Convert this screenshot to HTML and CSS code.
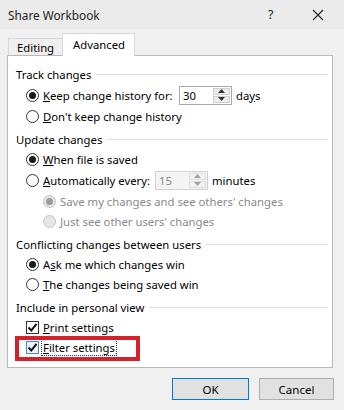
FILE: index.html
```html
<!DOCTYPE html>
<html lang="en">
<head>
    <meta charset="UTF-8">
    <title>Share Workbook</title>
    <link rel="stylesheet" href="styles.css">
</head>
<body>
    <div class="dialog">
        <div class="titlebar">
            <span class="title">Share Workbook</span>
            <span class="help">?</span>
            <span class="close">
                <svg width="12" height="12" viewBox="0 0 12 12"><path d="M1 1L11 11M11 1L1 11" stroke="#222" stroke-width="1.1"/></svg>
            </span>
        </div>

        <div class="tabs">
            <div class="tab">Editing</div>
            <div class="tab active">Advanced</div>
        </div>

        <div class="panel">
            <!-- Track changes -->
            <div class="group first"><span>Track changes</span></div>
            <div class="row r-spin">
                <span class="radio checked"></span>
                <span class="label w-keep"><u>K</u>eep change history for:</span>
                <div class="spin">
                    <span class="spin-val">30</span>
                    <span class="spin-btns">
                        <span class="spin-btn"><svg width="7" height="4" viewBox="0 0 7 4"><path d="M0 4L3.5 0L7 4Z" fill="#333"/></svg></span>
                        <span class="spin-btn"><svg width="7" height="4" viewBox="0 0 7 4"><path d="M0 0L3.5 4L7 0Z" fill="#333"/></svg></span>
                    </span>
                </div>
                <span class="after">da<u>y</u>s</span>
            </div>
            <div class="row">
                <span class="radio"></span>
                <span class="label"><u>D</u>on't keep change history</span>
            </div>

            <!-- Update changes -->
            <div class="group"><span>Update changes</span></div>
            <div class="row">
                <span class="radio checked"></span>
                <span class="label"><u>W</u>hen file is saved</span>
            </div>
            <div class="row r-spin">
                <span class="radio"></span>
                <span class="label w-auto"><u>A</u>utomatically every:</span>
                <div class="spin disabled">
                    <span class="spin-val">15</span>
                    <span class="spin-btns">
                        <span class="spin-btn"><svg width="7" height="4" viewBox="0 0 7 4"><path d="M0 4L3.5 0L7 4Z" fill="#a0a0a0"/></svg></span>
                        <span class="spin-btn"><svg width="7" height="4" viewBox="0 0 7 4"><path d="M0 0L3.5 4L7 0Z" fill="#a0a0a0"/></svg></span>
                    </span>
                </div>
                <span class="after">minutes</span>
            </div>
            <div class="row sub disabled">
                <span class="radio checked"></span>
                <span class="label">Save my changes and see others' changes</span>
            </div>
            <div class="row sub disabled">
                <span class="radio"></span>
                <span class="label">Just see other users' changes</span>
            </div>

            <!-- Conflicts -->
            <div class="group"><span>Conflicting changes between users</span></div>
            <div class="row">
                <span class="radio checked"></span>
                <span class="label">A<u>s</u>k me which changes win</span>
            </div>
            <div class="row">
                <span class="radio"></span>
                <span class="label"><u>T</u>he changes being saved win</span>
            </div>

            <!-- Personal view -->
            <div class="group"><span>Include in personal view</span></div>
            <div class="row">
                <span class="check"><svg width="11" height="11" viewBox="0 0 11 11"><path d="M1.5 5.5L4.3 8.5L9.5 1.8" fill="none" stroke="#111" stroke-width="2"/></svg></span>
                <span class="label"><u>P</u>rint settings</span>
            </div>
            <div class="row marked">
                <span class="check hover"><svg width="11" height="11" viewBox="0 0 11 11"><path d="M1.5 5.5L4.3 8.5L9.5 1.8" fill="none" stroke="#111" stroke-width="2"/></svg></span>
                <span class="label focus"><u>F</u>ilter settings</span>
            </div>
        </div>

        <div class="buttons">
            <button class="btn default">OK</button>
            <button class="btn">Cancel</button>
        </div>
    </div>
</body>
</html>
```

FILE: styles.css
```css
/* Dialog shell */
body {
    margin: 0;
    background-color: #f0f0f0;
    font-family: "Noto Sans", "Open Sans", sans-serif;
    font-size: 11.3px;
    color: #000;
}

.dialog {
    width: 344px;
    height: 410px;
    background-color: #f0f0f0;
}

/* Title bar */
.titlebar {
    height: 29px;
    display: flex;
    align-items: center;
    background-color: #ebebeb;
}

.title {
    flex: 1;
    padding-left: 8px;
    font-size: 11.8px;
    color: #222;
}

.help {
    width: 14px;
    margin-right: 30px;
    font-size: 12.5px;
    color: #222;
}

.close {
    display: flex;
    margin-right: 20px;
}

/* Tabs */
.tabs {
    display: flex;
    align-items: flex-end;
    height: 26px;
    padding-left: 8px;
}

.tab {
    height: 16px;
    width: 37px;
    padding: 0 8px;
    border: 1px solid #d9d9d9;
    border-bottom: none;
    background-color: #f0f0f0;
    line-height: 17px;
}

.tab.active {
    position: relative;
    height: 22px;
    width: 53px;
    padding: 0 8px 0 10px;
    margin-left: -1px;
    margin-bottom: -1px;
    background-color: #fff;
    line-height: 21px;
    z-index: 1;
}

/* Panel */
.panel {
    margin-left: 7px;
    width: 326px;
    height: 313px;
    box-sizing: border-box;
    background-color: #fff;
    border: 1px solid #b9b9b9;
    padding: 8px 4px 0 8px;
}

.group {
    display: flex;
    align-items: center;
    height: 20px;
    margin-top: 3px;
}

.group.first {
    margin-top: 0;
}

.group::after {
    content: "";
    flex: 1;
    height: 1px;
    margin-left: 5px;
    background-color: #dcdcdc;
}

.row {
    display: flex;
    align-items: center;
    height: 20px;
    padding-left: 10px;
}

.row.r-spin {
    height: 22px;
}

.row.sub {
    padding-left: 27px;
}

.label,
.after {
    flex-shrink: 0;
    margin-left: 4px;
    white-space: nowrap;
}

.w-keep {
    width: 136px;
}

.w-auto {
    width: 112px;
}

.row.disabled .label {
    color: #8a8a8a;
}

/* Radio buttons */
.radio {
    flex-shrink: 0;
    box-sizing: border-box;
    width: 13px;
    height: 13px;
    border: 1px solid #333;
    border-radius: 50%;
    background-color: #fff;
    display: flex;
    align-items: center;
    justify-content: center;
}

.radio.checked::after {
    content: "";
    width: 7px;
    height: 7px;
    border-radius: 50%;
    background-color: #1a1a1a;
}

.disabled .radio {
    border-color: #c4c4c4;
    background-color: #e6e6e6;
}

.disabled .radio.checked::after {
    background-color: #9c9c9c;
}

/* Checkboxes */
.check {
    flex-shrink: 0;
    box-sizing: border-box;
    width: 13px;
    height: 13px;
    border: 1px solid #333;
    background-color: #fff;
    display: flex;
    align-items: center;
    justify-content: center;
}

.check.hover {
    border-color: #4a8ac5;
    background-color: #eaf3fb;
}

.label.focus {
    outline: 1px dotted #333;
    margin-left: 3px;
    padding: 0 1px;
}

.row.marked {
    position: relative;
}

/* red annotation box */
.row.marked::after {
    content: "";
    position: absolute;
    left: -1px;
    top: -1px;
    width: 117px;
    height: 17px;
    border: 4px solid #d4222d;
}

/* Spin boxes */
.spin {
    flex-shrink: 0;
    display: flex;
    box-sizing: border-box;
    width: 53px;
    height: 19px;
    border: 1px solid #a9a9a9;
    background-color: #fff;
}

.spin-val {
    flex: 1;
    padding-left: 3px;
    line-height: 17px;
}

.spin-btns {
    display: flex;
    flex-direction: column;
    width: 17px;
    padding: 1px;
    gap: 1px;
}

.spin-btn {
    flex: 1;
    display: flex;
    align-items: center;
    justify-content: center;
    background-color: #ececec;
    border: 1px solid #cfcfcf;
}

.spin.disabled {
    border-color: #d2d2d2;
    background-color: #f4f4f4;
}

.spin.disabled .spin-val {
    color: #8a8a8a;
}

.spin.disabled .spin-btn {
    background-color: #f2f2f2;
    border-color: #dedede;
}

/* Footer buttons */
.buttons {
    display: flex;
    justify-content: flex-end;
    gap: 10px;
    padding: 10px 10px 0 0;
}

.btn {
    width: 75px;
    height: 22px;
    font-family: inherit;
    font-size: 11.5px;
    background-color: #e1e1e1;
    border: 1px solid #adadad;
    padding: 0;
    color: #000;
}

.btn.default {
    border-color: #0078d7;
    width: 77px;
}
```
